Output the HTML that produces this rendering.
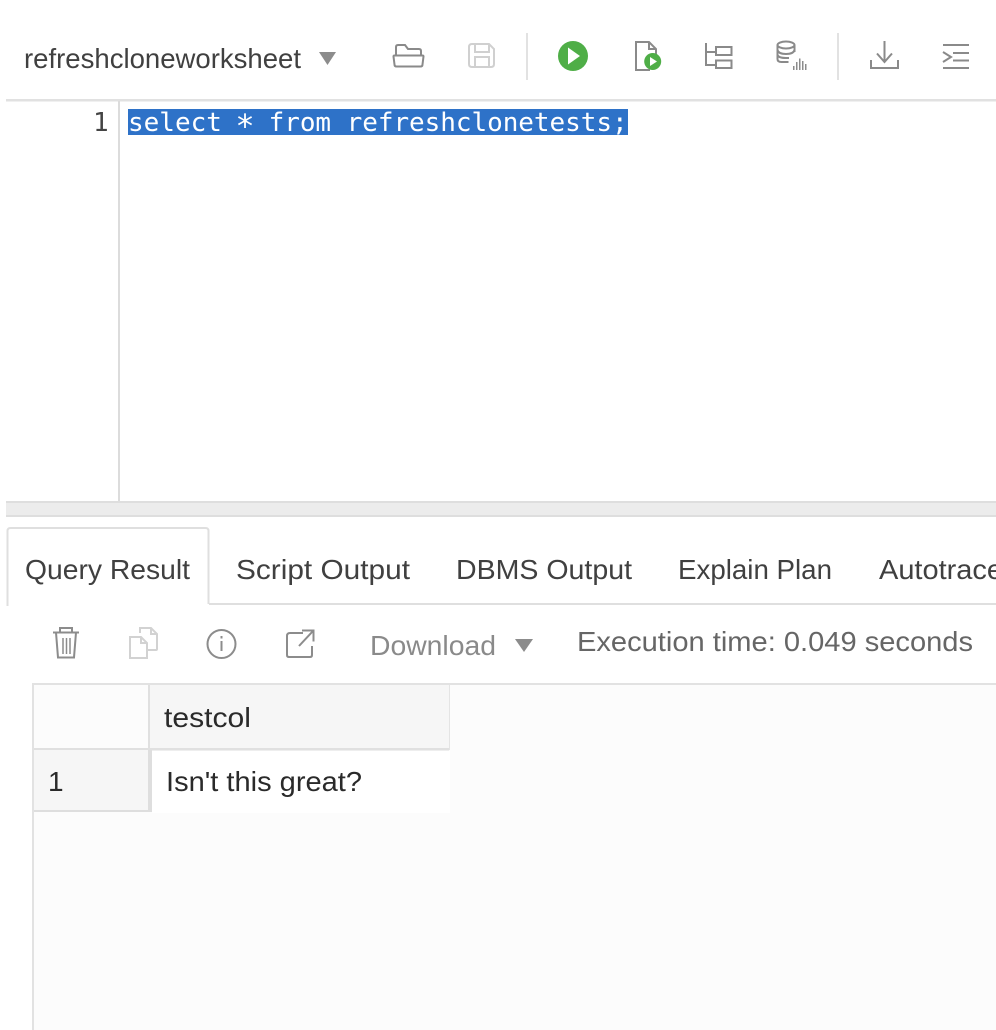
<!DOCTYPE html>
<html><head><meta charset="utf-8"><style>
html,body{margin:0;padding:0;background:#fff;width:996px;height:1030px;overflow:hidden}
svg{display:block}
text{font-family:"Liberation Sans",sans-serif;font-size:28px}
.m{font-family:"DejaVu Sans Mono","Liberation Mono",monospace;font-size:26px}
</style></head><body>
<svg width="996" height="1030" viewBox="0 0 996 1030" xmlns="http://www.w3.org/2000/svg">
<rect width="996" height="1030" fill="#fff"/>
<!-- toolbar -->
<text x="24" y="68" textLength="277" lengthAdjust="spacingAndGlyphs" fill="#404040">refreshcloneworksheet</text>
<path d="M319 52h17l-8.500 13z" fill="#8c8c8c"/>
<g fill="none" stroke="#8a8a8a" stroke-width="2">
<path d="M396 55v-8q0-2 2-2h7l3 4h11q2 0 2 2v4"/>
<path d="M394.500 55.500h28q1 0 1 1l-1 8q0 2-2 2h-24q-2 0-2-2l-1-8q0-1 1-1z"/>
</g>
<g fill="none" stroke="#d0d0d0" stroke-width="2">
<path d="M472 44h17l5 5v15q0 3-3 3h-19q-3 0-3-3v-17q0-3 3-3z"/>
<path d="M475 44v8h14v-8M475 67v-10h14v10"/>
</g>
<rect x="526" y="33" width="2" height="47" fill="#e2e2e2"/>
<circle cx="573" cy="56" r="15" fill="#4fae47"/>
<path d="M568 47.500l12 8.500-12 8.500z" fill="#fff"/>
<path d="M650 70h-14v-28h13l7 7v6M649 42v7h7" fill="none" stroke="#8a8a8a" stroke-width="2"/>
<circle cx="652.700" cy="61.500" r="8.500" fill="#4fae47"/>
<path d="M650 57l7 4.500-7 4.500z" fill="#fff"/>
<!-- second icon group -->
<g fill="none" stroke="#8a8a8a" stroke-width="2">
<path d="M706 43v22h10M706 52h10"/>
<rect x="716" y="47" width="15.500" height="8"/>
<rect x="716" y="60.500" width="15.500" height="7.500"/>
<ellipse cx="786" cy="45" rx="8.500" ry="3.500"/>
<path d="M777.500 45v14q0 3 4 3h7M794.500 45v7M777.500 50q1 4 8.500 4t8.500-4M777.500 55q1 3 8.500 3h3"/>
</g>
<g fill="#8c8c8c">
<rect x="793" y="66" width="1.500" height="4"/><rect x="796" y="62" width="1.500" height="8"/><rect x="799" y="58.500" width="1.500" height="11.500"/><rect x="802" y="61" width="1.500" height="9"/><rect x="805" y="64" width="1.500" height="6"/>
</g>
<rect x="837" y="33" width="2" height="47" fill="#e2e2e2"/>
<g fill="none" stroke="#8a8a8a" stroke-width="2">
<path d="M871 60v8h27v-8M884.500 41v21M877 53.500l7.500 8.500 7.500-8.500"/>
<path d="M943 45h26M953 53h16M953 60.500h16M943 68h26M943 52l8 5-8 5"/>
</g>
<rect x="6" y="99" width="990" height="2.500" fill="#e1e1e1"/>
<!-- editor -->
<rect x="118" y="101" width="2" height="400" fill="#dcdcdc"/>
<text class="m" x="93" y="131" fill="#444">1</text>
<rect x="128" y="109" width="500" height="26" fill="#2e72c8"/>
<text class="m" x="128" y="131" fill="#fff">select</text>
<text class="m" x="235.400" y="137" style="font-size:32px" fill="#fff">*</text>
<text class="m" x="268.600" y="131" textLength="359" fill="#fff">from refreshclonetests;</text>
<!-- splitter -->
<rect x="6" y="501" width="990" height="16" fill="#ececec"/>
<rect x="6" y="501" width="990" height="2" fill="#dedede"/>
<rect x="6" y="515" width="990" height="2" fill="#dedede"/>
<!-- tabs -->
<rect x="209" y="603" width="787" height="2" fill="#dfdfdf"/>
<path d="M7.500 606v-75q0-3 3-3h195q3 0 3 3v73" fill="#fff" stroke="#dfdfdf" stroke-width="2"/>
<text x="25" y="579" textLength="165" lengthAdjust="spacingAndGlyphs" fill="#404040">Query Result</text>
<text x="236" y="579" textLength="174" lengthAdjust="spacingAndGlyphs" fill="#404040">Script Output</text>
<text x="456" y="579" textLength="176" lengthAdjust="spacingAndGlyphs" fill="#404040">DBMS Output</text>
<text x="678" y="579" textLength="154" lengthAdjust="spacingAndGlyphs" fill="#404040">Explain Plan</text>
<text x="879" y="579" textLength="124" lengthAdjust="spacingAndGlyphs" fill="#404040">Autotrace</text>
<!-- result toolbar -->
<g fill="none" stroke="#8c8c8c" stroke-width="2">
<path d="M53 632.500h26M60 632v-4h12v4M56 632.500l2 25h16l2-25"/>
<path d="M63 638v16M66.500 638v16M70 638v16" stroke-width="1.500"/>
<circle cx="221.500" cy="644" r="14"/>
<path d="M221.500 641v10" /><path d="M221.500 636v2.500"/>
<path d="M303 633h-13q-3 0-3 3v19q0 2 2 2h21q2 0 2-2v-9M299 646l14-15M302 630.500h11.500v11"/>
</g>
<g fill="none" stroke="#d2d2d2" stroke-width="2">
<path d="M130 658v-21h11l6 6v15zM141 637v6h6"/>
<path d="M140 633v-5h11l6 6v15q0 1-1 1h-8M151 628v6h6"/>
</g>
<text x="370" y="655" textLength="126" lengthAdjust="spacingAndGlyphs" fill="#8a8a8a">Download</text>
<path d="M515 639h18l-9 13z" fill="#8c8c8c"/>
<text x="577" y="651" textLength="396" lengthAdjust="spacingAndGlyphs" fill="#666">Execution time: 0.049 seconds</text>
<!-- grid -->
<rect x="33" y="684" width="963" height="346" fill="#fcfcfc"/>
<rect x="32" y="683" width="964" height="2" fill="#e2e2e2"/>
<rect x="32" y="683" width="2" height="347" fill="#e2e2e2"/>
<rect x="150" y="685" width="299" height="63" fill="#f6f6f6"/>
<rect x="148" y="685" width="2" height="65" fill="#e0e0e0"/>
<rect x="34" y="748" width="415" height="2.500" fill="#e0e0e0"/>
<rect x="449" y="685" width="1" height="65" fill="#e4e4e4"/>
<rect x="34" y="750" width="115" height="60" fill="#f6f6f6"/>
<rect x="148" y="750" width="4" height="62" fill="#dedede"/>
<rect x="34" y="810" width="118" height="2" fill="#dedede"/>
<rect x="152" y="751" width="298" height="62" fill="#fff"/>
<text x="164" y="727" textLength="87" lengthAdjust="spacingAndGlyphs" fill="#2a2a2a">testcol</text>
<text x="48" y="791" fill="#2a2a2a">1</text>
<text x="166" y="791" textLength="196" lengthAdjust="spacingAndGlyphs" fill="#2a2a2a">Isn't this great?</text>
</svg>
</body></html>
